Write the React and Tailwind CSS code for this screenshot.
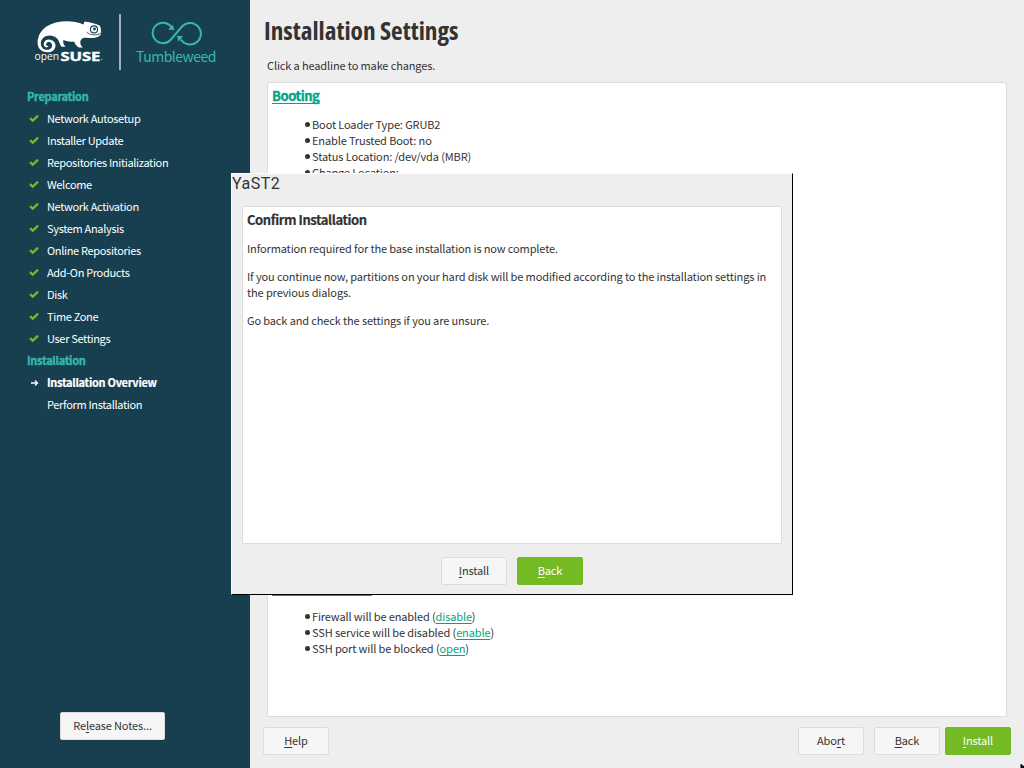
import React from "react";

const done = [
  "Network Autosetup", "Installer Update", "Repositories Initialization", "Welcome",
  "Network Activation", "System Analysis", "Online Repositories", "Add-On Products",
  "Disk", "Time Zone", "User Settings",
];

function Check() {
  return (
    <svg className="h-[10px] w-[10px]" viewBox="0 0 10 10" fill="none">
      <path d="M1 5.100 L3.800 7.700 L9 2.600" stroke="#73ba25" strokeWidth="2.300" />
    </svg>
  );
}

function Arrow() {
  return (
    <svg className="h-[9px] w-[9px]" viewBox="0 0 9 9" fill="none">
      <path d="M1 5 H7.500 M5 2.500 L7.500 5 L5 7.500" stroke="#fff" strokeWidth="1.3" />
    </svg>
  );
}

function Row({ icon, children, bold }) {
  return (
    <li className="flex h-[22px] items-center">
      <span className="flex w-[20px] justify-center pr-[6px]">{icon}</span>
      <span className={bold ? "font-bold tracking-[-0.3px] [-webkit-text-stroke:0.2px]" : ""}>{children}</span>
    </li>
  );
}

function Key({ children }) {
  return <span className="underline decoration-1 underline-offset-2 [text-decoration-skip-ink:none]">{children}</span>;
}

function Button({ primary, className = "w-[66px]", children }) {
  return (
    <button
      className={
        "flex h-[28px] shrink-0 items-center justify-center rounded-[2px] border pb-[2px] leading-[14px] tracking-[-0.13px] " +
        (primary ? "border-[#73ba25] bg-[#73ba25] text-white " : "border-[#dcdcdc] bg-[#f6f6f6] text-[#333] ") +
        className
      }
    >
      <span>{children}</span>
    </button>
  );
}

function Bullet({ children }) {
  return (
    <li className="flex h-4 items-center">
      <span className="mr-[2px] h-[5px] w-[5px] rounded-full bg-[#333]" />
      <span className="whitespace-pre">{children}</span>
    </li>
  );
}

function Link({ children }) {
  return (
    <a className="text-[#00a489] underline decoration-1 underline-offset-2 [text-decoration-skip-ink:none]">{children}</a>
  );
}

function Chameleon() {
  return (
    <svg className="h-[46px] w-[70px]" viewBox="34 19 70 46">
      <path
        fill="#fff"
        fillRule="evenodd"
        d="M83.500 24.500 L84.300 21.800 C89 22 93 23 99.500 25.500 C101 27 101.200 31 100.800 34.500 C98 38.500 91 38.300 86.500 37.800 C81.500 37.500 80.500 40 80.300 42.500 C80.300 44.500 81.500 46.500 83 47.500 L79 47.500 C76 46 75 43.500 74 41.500 C70 42 67 41.500 63.500 40 C62.500 42.500 64 45 65.500 46.700 L61.500 46.700 C59.500 44.500 59.500 42.500 58.500 40.500 C57 37.500 54 35.800 50 35.600 C44.500 35.600 40.800 39 40.800 43.500 C41 48 44.500 50.300 48 49.800 C51.500 49.300 53 46 51.500 43.500 C50 41.300 46.800 41.600 46.200 43.700 C45.800 45.300 47 46.300 48.500 45.700 C48.300 47.700 45.300 48 44.200 46 C42.800 43 45 39.500 48.800 39.500 C53 39.500 55.800 42.500 55.500 46 C55 51.500 49.500 53 45.500 52 C39 51 36.800 45.500 37.800 39.500 C39 33.500 42 29.500 46.500 26.500 C56 20.500 71.500 19.500 83.500 24.500 Z"
      />
      <circle cx="94" cy="29.400" r="3.500" fill="#fff" stroke="#173f4f" strokeWidth="1.100" />
      <circle cx="94.500" cy="29" r="1.400" fill="#173f4f" />
      <path d="M86.500 32 C90 35.500 96 35.500 100.800 33.500" fill="none" stroke="#173f4f" strokeWidth="0.800" />
      <text x="34.500" y="60.400" fontFamily="Open Sans" fontSize="11.500" fill="#fff" textLength="24.500" lengthAdjust="spacingAndGlyphs">open</text>
      <text x="60.400" y="60.500" fontFamily="Open Sans" fontWeight="700" fontSize="13" fill="#fff" stroke="#fff" strokeWidth="0.400" textLength="40" lengthAdjust="spacingAndGlyphs">SUSE</text>
      <circle cx="101.800" cy="59.500" r="0.600" fill="#fff" />
    </svg>
  );
}

function Infinity() {
  return (
    <svg className="h-[26px] w-[52px]" viewBox="150 22 52 26" fill="none">
      <g stroke="#35b9ab" strokeWidth="2">
        <path d="M172 29 A10.300 10.300 0 1 0 170.500 41 C174 37.500 178 32 182.500 27 A10.800 10.800 0 1 1 181 40.500" />
      </g>
      <path d="M174.300 31 L168.300 30.800 L172.800 25.700 Z M177 36.800 L183 37.300 L178.500 42.800 Z" fill="#35b9ab" />
    </svg>
  );
}

export default function App() {
  return (
    <div className="relative flex h-[768px] w-[1024px] overflow-hidden bg-[#eeeeee] text-[11px] leading-4 tracking-[-0.13px] text-[#333] [font-family:'Noto_Sans_CJK_SC',sans-serif]">
      <aside className="flex w-[250px] shrink-0 flex-col bg-[#173f4f] text-white">
        <header className="flex h-[85px] pt-[14px] pl-[34px] tracking-normal">
          <div className="pt-[5px]"><Chameleon /></div>
          <div className="ml-[15px] h-[56px] w-[2px] bg-[#9fb0b7]" />
          <div className="ml-[15px] flex w-[80px] flex-col items-center pt-[7px] text-[#35b9ab]">
            <Infinity />
            <span className="text-[14px] leading-[18px] tracking-[-0.5px]">Tumbleweed</span>
          </div>
        </header>
        <nav className="pl-[27px] tracking-[-0.33px]">
          <h2 className="h-[22px] font-bold leading-[22px] tracking-[-0.28px] text-[#35b9ab] [-webkit-text-stroke:0.35px]">Preparation</h2>
          <ul>{done.map((t) => <Row key={t} icon={<Check />}>{t}</Row>)}</ul>
          <h2 className="h-[22px] font-bold leading-[22px] tracking-[-0.28px] text-[#35b9ab] [-webkit-text-stroke:0.35px]">Installation</h2>
          <ul>
            <Row icon={<Arrow />} bold>Installation Overview</Row>
            <Row>Perform Installation</Row>
          </ul>
        </nav>
        <div className="mt-auto flex pb-[28px] pl-[60px]">
          <Button className="w-[105px]">Re<Key>l</Key>ease Notes...</Button>
        </div>
      </aside>
      <main className="flex flex-1 flex-col">
        <h1 className="mt-[13px] ml-[14px] h-[34px] whitespace-nowrap text-[25.3px] font-bold leading-[34px] tracking-[-0.02px] [font-family:'Open_Sans',sans-serif] [font-stretch:75%]">Installation Settings</h1>
        <p className="mt-[10px] ml-[17px]">Click a headline to make changes.</p>
        <section className="mt-[9px] mr-[17px] ml-[17px] flex h-[635px] flex-col rounded-[2px] border border-[#dcdcdc] bg-white">
          <h2 className="ml-1 mt-[5px] h-[17px] text-[13px] font-bold leading-4 tracking-[-0.4px] [-webkit-text-stroke:0.3px]"><Link>Booting</Link></h2>
          <ul className="mt-[11px] ml-[37px]">
            <Bullet>Boot Loader Type: GRUB2</Bullet>
            <Bullet>Enable Trusted Boot: no</Bullet>
            <Bullet>Status Location: /dev/vda (MBR)</Bullet>
            <Bullet>Change Location:</Bullet>
          </ul>
          <div className="mt-auto mb-[60px]">
            <div className="ml-1 mb-[12px] h-[2px] w-[100px] bg-[#00a489]" />
            <ul className="ml-[37px]">
              <Bullet>Firewall will be enabled (<Link>disable</Link>)</Bullet>
              <Bullet>SSH service will be disabled (<Link>enable</Link>)</Bullet>
              <Bullet>SSH port will be blocked (<Link>open</Link>)</Bullet>
            </ul>
          </div>
        </section>
        <footer className="mt-[10px] flex pr-[13px] pl-[13px]">
          <Button><Key>H</Key>elp</Button>
          <div className="ml-auto flex">
            <Button className="mr-[10px] w-[66px]">Abo<Key>r</Key>t</Button>
            <Button className="mr-[5px] w-[66px]"><Key>B</Key>ack</Button>
            <Button primary><Key>I</Key>nstall</Button>
          </div>
        </footer>
      </main>
      <div role="dialog" className="absolute top-[173px] left-[231px] flex h-[422px] w-[562px] flex-col border-t border-r border-b border-l border-t-white border-r-black border-b-black border-l-white bg-[#eeeeee]">
        <div className="h-[32px] text-[16px] leading-[20px] tracking-[0.5px] [font-family:Roboto,sans-serif]">YaST2</div>
        <section className="mr-[10px] ml-[10px] h-[338px] rounded-[2px] border border-[#dcdcdc] bg-white px-1 pt-[5px]">
          <h2 className="text-[13px] font-bold leading-4 tracking-[-0.42px] [-webkit-text-stroke:0.2px]">Confirm Installation</h2>
          <p className="mt-[12px]">Information required for the base installation is now complete.</p>
          <p className="mt-3 tracking-[-0.12px]">If you continue now, partitions on your hard disk will be modified according to the installation settings in<br />the previous dialogs.</p>
          <p className="mt-3">Go back and check the settings if you are unsure.</p>
        </section>
        <div className="mt-[13px] flex justify-center gap-[10px]">
          <Button><Key>I</Key>nstall</Button>
          <Button primary><Key>B</Key>ack</Button>
        </div>
      </div>
      <svg className="absolute right-0 bottom-0 h-[4px] w-[4px]" viewBox="0 0 4 4">
        <path d="M0.500 0 H1.500 L3 2 L4 1.500 V4 H0.500 Z" fill="#000" />
      </svg>
    </div>
  );
}
